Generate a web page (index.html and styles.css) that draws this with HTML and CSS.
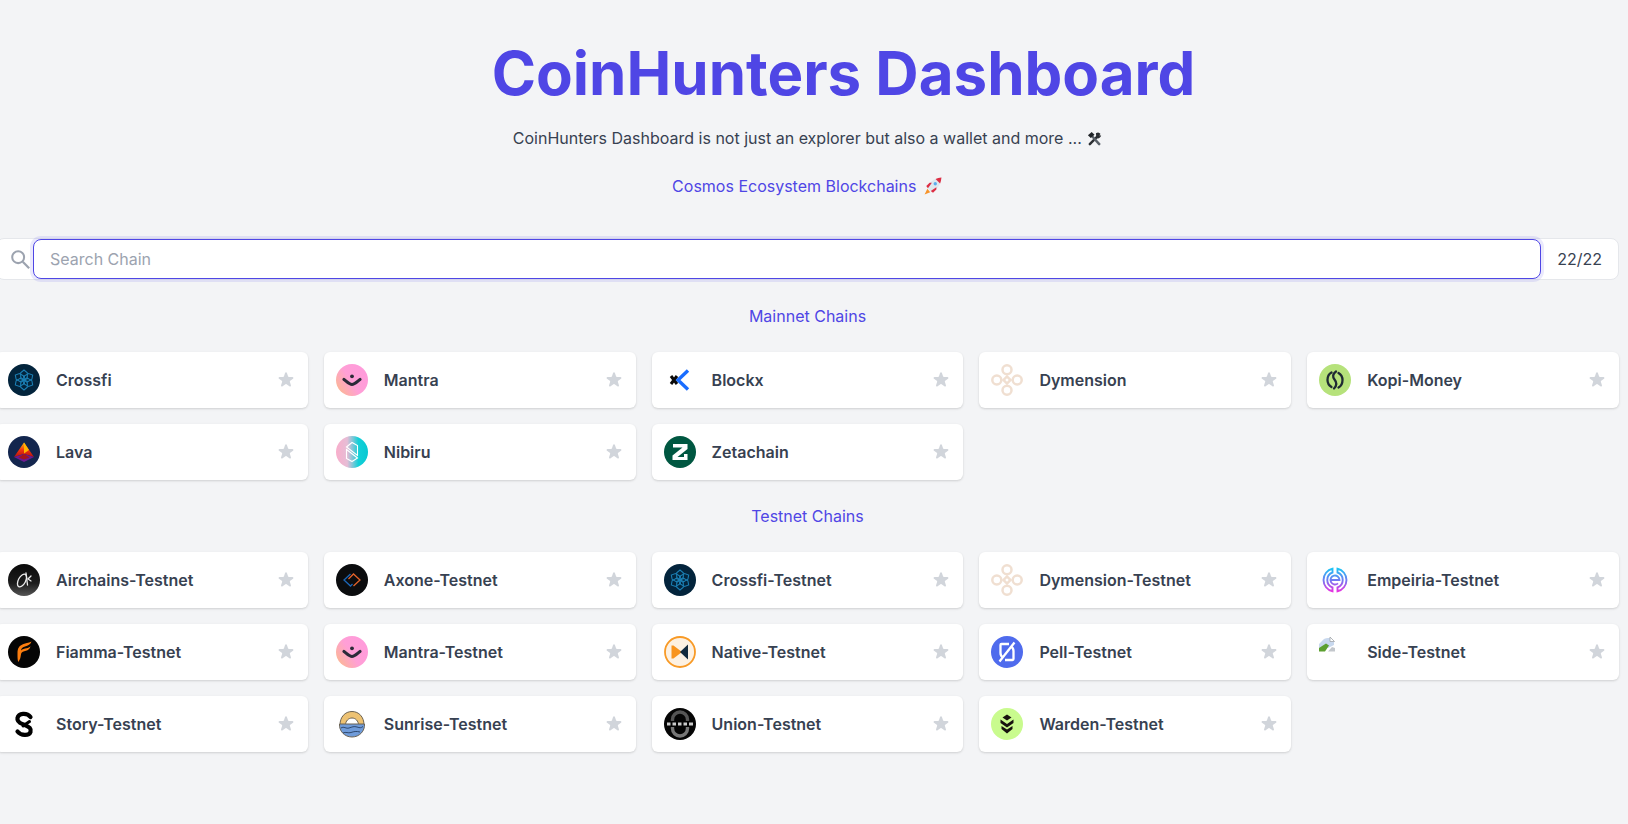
FILE: index.html
```html
<!DOCTYPE html>
<html lang="en">
<head>
    <meta charset="UTF-8">
    <meta name="viewport" content="width=device-width, initial-scale=1.0">
    <title>CoinHunters Dashboard</title>
    <link rel="stylesheet" href="styles.css">
</head>
<body>
    <svg class="icon-defs" xmlns="http://www.w3.org/2000/svg" aria-hidden="true">
        <defs>
            <linearGradient id="grad-mantra" x1="0" y1="1" x2="1" y2="0.35">
                <stop offset="0" stop-color="#fbbd83"/>
                <stop offset="0.55" stop-color="#ff9fd6"/>
                <stop offset="1" stop-color="#ff9bdb"/>
            </linearGradient>
            <linearGradient id="grad-nibiru" x1="0" y1="0" x2="1" y2="0">
                <stop offset="0" stop-color="#f9aecb"/>
                <stop offset="0.35" stop-color="#e6bdd6"/>
                <stop offset="0.7" stop-color="#12d0d8"/>
                <stop offset="1" stop-color="#08c8d2"/>
            </linearGradient>
            <linearGradient id="grad-lava" x1="0" y1="0" x2="0" y2="1">
                <stop offset="0" stop-color="#ffc20e"/>
                <stop offset="0.5" stop-color="#f2360f"/>
                <stop offset="1" stop-color="#b3140f"/>
            </linearGradient>
            <linearGradient id="grad-air" x1="0" y1="0" x2="0" y2="1">
                <stop offset="0" stop-color="#0a0a0a"/>
                <stop offset="0.6" stop-color="#1c1c1c"/>
                <stop offset="1" stop-color="#555"/>
            </linearGradient>
            <linearGradient id="grad-emp" gradientUnits="userSpaceOnUse" x1="0" y1="4" x2="0" y2="28">
                <stop offset="0" stop-color="#19c8f5"/>
                <stop offset="0.5" stop-color="#6f7cf2"/>
                <stop offset="1" stop-color="#ec2fe0"/>
            </linearGradient>

            <path id="crossfi-petal" d="M16 16l-3.300-2.500V8.800L16 6l3.300 2.800v4.700z"/>

            <symbol id="logo-crossfi" viewBox="0 0 32 32">
                <circle cx="16" cy="16" r="16" fill="#03243c"/>
                <g fill="none" stroke="#1b7fb4" stroke-width="1.100">
                    <use href="#crossfi-petal"/>
                    <use href="#crossfi-petal" transform="rotate(60 16 16)"/>
                    <use href="#crossfi-petal" transform="rotate(120 16 16)"/>
                    <use href="#crossfi-petal" transform="rotate(180 16 16)"/>
                    <use href="#crossfi-petal" transform="rotate(240 16 16)"/>
                    <use href="#crossfi-petal" transform="rotate(300 16 16)"/>
                </g>
            </symbol>

            <symbol id="logo-mantra" viewBox="0 0 32 32">
                <circle cx="16" cy="16" r="16" fill="url(#grad-mantra)"/>
                <path d="M8 15.500c2.500 1.800 5.500 5 8 5s5.500-3.200 8-5" fill="none" stroke="#2c2a38" stroke-width="3.200" stroke-linecap="round"/>
                <circle cx="16" cy="12.300" r="1.900" fill="#2c2a38"/>
            </symbol>

            <symbol id="logo-blockx" viewBox="0 0 32 32">
                <path d="M7 12l6 8M7 20l6-8" stroke="#0b0b0b" stroke-width="3" fill="none"/>
                <path d="M24 6.500L14 16l10 9.500" stroke="#1a6dff" stroke-width="3.400" fill="none"/>
            </symbol>

            <symbol id="logo-dymension" viewBox="0 0 32 32">
                <g fill="none" stroke="#f0dfd1" stroke-width="2.500">
                    <circle cx="16" cy="5.800" r="4.500"/>
                    <circle cx="16" cy="26.200" r="4.500"/>
                    <circle cx="5.800" cy="16" r="4.500"/>
                    <circle cx="26.200" cy="16" r="4.500"/>
                    <rect x="13.500" y="13.500" width="5" height="5" transform="rotate(45 16 16)"/>
                </g>
            </symbol>

            <symbol id="logo-kopi" viewBox="0 0 32 32">
                <circle cx="16" cy="16" r="16" fill="#b6e27b"/>
                <g fill="none" stroke="#1f2a33" stroke-width="2.300" stroke-linecap="round">
                    <path d="M12.500 8.500C10 9.800 8.500 12.500 8.500 16c0 3 1.500 5.500 4 7"/>
                    <path d="M19.500 23.500c2.500-1.300 4-4 4-7.500 0-3-1.500-5.500-4-7"/>
                    <path d="M17 7.500c-3.500 2.500-3.500 5.500-1.500 8 2.500 3 2.500 6-.5 9"/>
                </g>
            </symbol>

            <symbol id="logo-lava" viewBox="0 0 32 32">
                <circle cx="16" cy="16" r="16" fill="#13264e"/>
                <path d="M16 6.500l10 14.500-10-3-10 3z" fill="url(#grad-lava)"/>
                <path d="M16 6.500l5 7.500-5 3.500z" fill="#ffb400"/>
                <path d="M6 21l10-3 10 3-10 5z" fill="#6c1a8f"/>
                <path d="M10.500 21.500l5.500-3.500 5.500 3.500-5.500 2z" fill="#a5141d"/>
            </symbol>

            <symbol id="logo-nibiru" viewBox="0 0 32 32">
                <circle cx="16" cy="16" r="16" fill="url(#grad-nibiru)"/>
                <g fill="none" stroke="#fff" stroke-width="1.100">
                    <path d="M10.500 11L16 6.500l5.500 3v10z"/>
                    <path d="M10.500 13.500L21.500 22 16 25.500l-5.500-3z"/>
                </g>
            </symbol>

            <symbol id="logo-zeta" viewBox="0 0 32 32">
                <circle cx="16" cy="16" r="16" fill="#005741"/>
                <path d="M9 8h14.500v5L13.500 21H20v-3h3.500v6h-15v-4.500l10-8H9z" fill="#fff"/>
            </symbol>

            <symbol id="logo-airchains" viewBox="0 0 32 32">
                <circle cx="16" cy="16" r="16" fill="url(#grad-air)"/>
                <g fill="none" stroke="#ececec" stroke-width="1.300" stroke-linecap="round">
                    <ellipse cx="14" cy="16.500" rx="3.600" ry="7" transform="rotate(28 14 16.500)"/>
                    <path d="M18 9l1.500 12"/>
                    <path d="M23 12l-3 3 3 2"/>
                </g>
            </symbol>

            <symbol id="logo-axone" viewBox="0 0 32 32">
                <circle cx="16" cy="16" r="16" fill="#0b0c0e"/>
                <path d="M14.500 10L8 16l6.500 6 2-2" fill="none" stroke="#1c67b8" stroke-width="1.300"/>
                <path d="M17.500 22l6.500-6-6.500-6-5 5" fill="none" stroke="#e2622a" stroke-width="1.300"/>
            </symbol>

            <symbol id="logo-empeiria" viewBox="0 0 32 32">
                <g fill="none" stroke="url(#grad-emp)" stroke-width="1.900">
                    <path d="M13.500 4.700a11.600 11.600 0 0 0 0 22.600V23.500a8 8 0 0 1 0-15z"/>
                    <path d="M18.500 4.700a11.600 11.600 0 0 1 0 22.600V23.500a8 8 0 0 0 0-15z"/>
                    <path d="M11.500 16h9a4.500 4.500 0 1 0-1.500 3.400"/>
                </g>
            </symbol>

            <symbol id="logo-fiamma" viewBox="0 0 32 32">
                <circle cx="16" cy="16" r="16" fill="#050505"/>
                <path d="M23.500 5.500c-1 3-3.500 4.200-6.500 5-3 .8-4 2.300-4 4.500v-.5c1.500-1.500 3.500-1.800 5.500-2.200 1.700-.4 3-.9 4-2-.5 2.500-2.500 4-4.500 4.500-2.500.6-4.200 1-4.800 2.700-.5 1.500-.2 5.500-3 8.500-.8-3-.7-6-.7-9 0-4.500 1.500-7.500 6-9 3.500-1.100 6-1.200 8-2.500z" fill="#fb7d0f"/>
            </symbol>

            <symbol id="logo-native" viewBox="0 0 32 32">
                <circle cx="16" cy="16" r="15" fill="#fdf1e2" stroke="#f89a26" stroke-width="1.800"/>
                <path d="M7.500 9.500h2L18 16l-8.500 6.500h-2z" fill="#f8941e"/>
                <path d="M24 8.500v15L16 16z" fill="#132a3d"/>
            </symbol>

            <symbol id="logo-pell" viewBox="0 0 32 32">
                <circle cx="16" cy="16" r="16" fill="#4f6bed"/>
                <g fill="none" stroke="#fff" stroke-width="2.300" stroke-linejoin="round">
                    <path d="M18 8H10.500a1 1 0 0 0-1 1v8c0 2 .8 3.500 2.500 4.500"/>
                    <path d="M14 24h7.500a1 1 0 0 0 1-1v-8c0-2-.8-3.500-2.500-4.500"/>
                    <path d="M8.500 25.500L23.500 6.500"/>
                </g>
            </symbol>

            <symbol id="logo-story" viewBox="0 0 32 32">
                <g fill="none" stroke="#000" stroke-linecap="round">
                    <path d="M22.500 9C19 4.500 10.500 5 9.500 10 8.500 15 14 15.500 17 17c4 2 6.500 3 5.500 7-1.500 4-9.500 4-13-.5" stroke-width="4.200"/>
                    <path d="M21.500 13.500L15 18" stroke-width="3"/>
                </g>
            </symbol>

            <symbol id="logo-sunrise" viewBox="0 0 32 32">
                <path d="M4 17C4 9 9 3.500 16 3.500S28 9 28 17z" fill="#edc273" stroke="#6b6253" stroke-width="1"/>
                <path d="M9.500 17c0-4 3-7 6.500-7s6.500 3 6.500 7z" fill="#fff" stroke="#6b6253" stroke-width="1"/>
                <path d="M3.500 16h25c.5 7-5 13-12.500 13S3 23 3.500 16z" fill="#6f9bd9" stroke="#6b6253" stroke-width="1"/>
                <path d="M5 20c3-2 5 1 8 0s5-2 8-1 4 1 6-.5M7 25c3-1.500 5 .5 8-.5s5-1.500 9-.5" fill="none" stroke="#2f4a70" stroke-width="1"/>
            </symbol>

            <symbol id="logo-union" viewBox="0 0 32 32">
                <circle cx="16" cy="16" r="16" fill="#050505"/>
                <path d="M8.500 13v-1.500a7.500 7.500 0 0 1 15 0V13" fill="none" stroke="#555" stroke-width="3.400"/>
                <path d="M8.500 19v1.500a7.500 7.500 0 0 0 15 0V19" fill="none" stroke="#777" stroke-width="3.400"/>
                <path d="M3 16h3.500M8.500 16H12M14 16h3.500M19.500 16H23M25 16h4" stroke="#ccc" stroke-width="3"/>
            </symbol>

            <symbol id="logo-warden" viewBox="0 0 32 32">
                <circle cx="16" cy="16" r="16" fill="#c9fb8e"/>
                <path d="M16 6.500l4.500 3-4.500 3-4.500-3z" fill="#17120f"/>
                <path d="M9.500 11.500l6.500 4.500 6.500-4.500v3.500L16 19.500 9.500 15z" fill="#17120f"/>
                <path d="M10.500 18l5.500 3.500 5.500-3.500v3L16 25.500 10.500 21z" fill="#17120f"/>
            </symbol>

            <symbol id="icon-star" viewBox="0 0 20 20">
                <path d="M9.050 2.930c.3-.92 1.600-.92 1.900 0l1.070 3.290a1 1 0 0 0 .95.690h3.460c.97 0 1.370 1.240.59 1.810l-2.800 2.030a1 1 0 0 0-.36 1.120l1.070 3.290c.3.920-.76 1.690-1.540 1.120l-2.800-2.030a1 1 0 0 0-1.180 0l-2.800 2.030c-.78.570-1.840-.2-1.540-1.120l1.070-3.290a1 1 0 0 0-.36-1.120l-2.800-2.030c-.78-.57-.38-1.810.59-1.810h3.460a1 1 0 0 0 .95-.69z"/>
            </symbol>
        </defs>
    </svg>

    <main class="page">
        <header class="hero">
            <h1 class="hero-title">CoinHunters Dashboard</h1>
            <p class="hero-text">CoinHunters Dashboard is not just an explorer but also a wallet and more ...
                <svg class="emoji" viewBox="0 0 16 16" xmlns="http://www.w3.org/2000/svg">
                    <path d="M3 14L12.500 4.500" stroke="#2b2f33" stroke-width="2.600" stroke-linecap="round"/>
                    <path d="M9.500 2.500a3.500 3.500 0 0 1 5 .8l-1.900 1.200.6 1 1.900-1.200a3.500 3.500 0 0 1-5 3.200z" fill="#2b2f33"/>
                    <path d="M13 14L5 5" stroke="#596068" stroke-width="2.600" stroke-linecap="round"/>
                    <path d="M1 4.500L5 1l3 3-4 3.500z" fill="#1f2327"/>
                </svg>
            </p>
            <p class="hero-sub">Cosmos Ecosystem Blockchains
                <svg class="emoji emoji-rocket" viewBox="0 0 16 16" xmlns="http://www.w3.org/2000/svg">
                    <path d="M3 10.500l-2.500 5 5-2z" fill="#f79329"/>
                    <path d="M3 9.500c.5-3 3.500-7.500 12.500-9-1 9-6 12-9 12.500z" fill="#dfe8ee"/>
                    <path d="M15.500.5c-.2 2-.6 3.700-1.200 5.200L10.300 1.700C11.800 1.100 13.500.7 15.500.5z" fill="#dd2e44"/>
                    <path d="M2 8l3-3h2L3.500 10zM8 14l3-3v-2l-5 3.500z" fill="#dd2e44"/>
                    <circle cx="10" cy="6" r="1.500" fill="#5dadec"/>
                </svg>
            </p>
        </header>

        <div class="search-bar">
            <span class="search-icon">
                <svg viewBox="0 0 24 24" xmlns="http://www.w3.org/2000/svg">
                    <circle cx="10" cy="10" r="6.500" fill="none" stroke="#9ca3af" stroke-width="2.200"/>
                    <path d="M15 15l7 7" stroke="#9ca3af" stroke-width="2.400"/>
                </svg>
            </span>
            <input class="search-input" type="text" placeholder="Search Chain">
            <span class="search-count">22/22</span>
        </div>

        <h2 class="section-title">Mainnet Chains</h2>
        <div class="chain-grid">
            <a class="chain-card" href="#crossfi"><svg class="chain-logo"><use href="#logo-crossfi"/></svg><span class="chain-name">Crossfi</span><svg class="chain-star"><use href="#icon-star"/></svg></a>
            <a class="chain-card" href="#mantra"><svg class="chain-logo"><use href="#logo-mantra"/></svg><span class="chain-name">Mantra</span><svg class="chain-star"><use href="#icon-star"/></svg></a>
            <a class="chain-card" href="#blockx"><svg class="chain-logo"><use href="#logo-blockx"/></svg><span class="chain-name">Blockx</span><svg class="chain-star"><use href="#icon-star"/></svg></a>
            <a class="chain-card" href="#dymension"><svg class="chain-logo"><use href="#logo-dymension"/></svg><span class="chain-name">Dymension</span><svg class="chain-star"><use href="#icon-star"/></svg></a>
            <a class="chain-card" href="#kopi-money"><svg class="chain-logo"><use href="#logo-kopi"/></svg><span class="chain-name">Kopi-Money</span><svg class="chain-star"><use href="#icon-star"/></svg></a>
            <a class="chain-card" href="#lava"><svg class="chain-logo"><use href="#logo-lava"/></svg><span class="chain-name">Lava</span><svg class="chain-star"><use href="#icon-star"/></svg></a>
            <a class="chain-card" href="#nibiru"><svg class="chain-logo"><use href="#logo-nibiru"/></svg><span class="chain-name">Nibiru</span><svg class="chain-star"><use href="#icon-star"/></svg></a>
            <a class="chain-card" href="#zetachain"><svg class="chain-logo"><use href="#logo-zeta"/></svg><span class="chain-name">Zetachain</span><svg class="chain-star"><use href="#icon-star"/></svg></a>
        </div>

        <h2 class="section-title">Testnet Chains</h2>
        <div class="chain-grid">
            <a class="chain-card" href="#airchains"><svg class="chain-logo"><use href="#logo-airchains"/></svg><span class="chain-name">Airchains-Testnet</span><svg class="chain-star"><use href="#icon-star"/></svg></a>
            <a class="chain-card" href="#axone"><svg class="chain-logo"><use href="#logo-axone"/></svg><span class="chain-name">Axone-Testnet</span><svg class="chain-star"><use href="#icon-star"/></svg></a>
            <a class="chain-card" href="#crossfi-testnet"><svg class="chain-logo"><use href="#logo-crossfi"/></svg><span class="chain-name">Crossfi-Testnet</span><svg class="chain-star"><use href="#icon-star"/></svg></a>
            <a class="chain-card" href="#dymension-testnet"><svg class="chain-logo"><use href="#logo-dymension"/></svg><span class="chain-name">Dymension-Testnet</span><svg class="chain-star"><use href="#icon-star"/></svg></a>
            <a class="chain-card" href="#empeiria"><svg class="chain-logo"><use href="#logo-empeiria"/></svg><span class="chain-name">Empeiria-Testnet</span><svg class="chain-star"><use href="#icon-star"/></svg></a>
            <a class="chain-card" href="#fiamma"><svg class="chain-logo"><use href="#logo-fiamma"/></svg><span class="chain-name">Fiamma-Testnet</span><svg class="chain-star"><use href="#icon-star"/></svg></a>
            <a class="chain-card" href="#mantra-testnet"><svg class="chain-logo"><use href="#logo-mantra"/></svg><span class="chain-name">Mantra-Testnet</span><svg class="chain-star"><use href="#icon-star"/></svg></a>
            <a class="chain-card" href="#native"><svg class="chain-logo"><use href="#logo-native"/></svg><span class="chain-name">Native-Testnet</span><svg class="chain-star"><use href="#icon-star"/></svg></a>
            <a class="chain-card" href="#pell"><svg class="chain-logo"><use href="#logo-pell"/></svg><span class="chain-name">Pell-Testnet</span><svg class="chain-star"><use href="#icon-star"/></svg></a>
            <a class="chain-card" href="#side">
                <span class="chain-logo">
                    <svg class="broken-image" viewBox="0 0 16 16" xmlns="http://www.w3.org/2000/svg">
                        <path d="M3 5q2-3 6-3h2l4 4v3l-6 3H0V8z" fill="#c8d8ee"/>
                        <path d="M11 1v4.500h4.500z" fill="#fff" stroke="#a0a4aa" stroke-width="0.800"/>
                        <path d="M0 15.500V12l7-4.500 3 2-4 6z" fill="#5ca030"/>
                        <path d="M9 15.500l4-4.500 3 1v3.500z" fill="#c3c7cc"/>
                    </svg>
                </span>
                <span class="chain-name">Side-Testnet</span><svg class="chain-star"><use href="#icon-star"/></svg>
            </a>
            <a class="chain-card" href="#story"><svg class="chain-logo"><use href="#logo-story"/></svg><span class="chain-name">Story-Testnet</span><svg class="chain-star"><use href="#icon-star"/></svg></a>
            <a class="chain-card" href="#sunrise"><svg class="chain-logo"><use href="#logo-sunrise"/></svg><span class="chain-name">Sunrise-Testnet</span><svg class="chain-star"><use href="#icon-star"/></svg></a>
            <a class="chain-card" href="#union"><svg class="chain-logo"><use href="#logo-union"/></svg><span class="chain-name">Union-Testnet</span><svg class="chain-star"><use href="#icon-star"/></svg></a>
            <a class="chain-card" href="#warden"><svg class="chain-logo"><use href="#logo-warden"/></svg><span class="chain-name">Warden-Testnet</span><svg class="chain-star"><use href="#icon-star"/></svg></a>
        </div>
    </main>
</body>
</html>
```

FILE: styles.css
```css
:root {
    --primary-color: #4f46e5;
    --text-color: #374151;
    --border-color: #e5e7eb;
    --page-color: #f3f4f6;
}

* {
    margin: 0;
    padding: 0;
    box-sizing: border-box;
}

html, body {
    height: 100%;
    overflow: hidden;
}

body {
    font-family: Inter, 'Noto Sans', sans-serif;
    font-size: 16px;
    line-height: 24px;
    background-color: var(--page-color);
    color: var(--text-color);
}

.icon-defs {
    position: absolute;
    width: 0;
    height: 0;
}

.page {
    width: 1623px;
    margin-left: -4px;
    padding-top: 43px;
}

.hero {
    text-align: center;
}

.hero-title {
    padding-left: 72px;
    font-size: 60px;
    line-height: 60px;
    font-weight: 700;
    color: var(--primary-color);
}

.hero-text {
    margin-top: 23px;
}

.hero-sub {
    margin-top: 24px;
    color: var(--primary-color);
}

.emoji {
    width: 15px;
    height: 15px;
    margin-left: 1px;
    vertical-align: -2px;
}

.emoji-rocket {
    width: 18px;
    height: 18px;
    margin-left: 3px;
    margin-right: 1px;
    vertical-align: -3px;
}

.search-bar {
    display: flex;
    align-items: center;
    height: 42px;
    margin-top: 40px;
    background-color: #fff;
    border: 1px solid var(--border-color);
    border-radius: 8px;
}

.search-icon {
    display: flex;
    justify-content: flex-end;
    flex: 0 0 36px;
    padding-right: 2px;
}

.search-icon svg {
    width: 22px;
    height: 22px;
}

.search-input {
    flex: 1;
    height: 40px;
    padding: 0 16px;
    font: inherit;
    color: var(--text-color);
    background-color: #fff;
    border: 1px solid var(--primary-color);
    border-radius: 8px;
    outline: none;
    box-shadow: 0 0 0 3px rgba(79, 70, 229, 0.12);
}

.search-input::placeholder {
    color: #9ca3af;
}

.search-count {
    padding: 0 16px;
}

.section-title {
    margin-top: 24px;
    font-size: 16px;
    line-height: 24px;
    font-weight: 400;
    text-align: center;
    color: var(--primary-color);
}

.chain-grid {
    display: grid;
    grid-template-columns: repeat(5, 1fr);
    gap: 16px;
    margin-top: 24px;
}

.chain-card {
    display: flex;
    align-items: center;
    height: 56px;
    padding: 0 12px;
    background-color: #fff;
    border-radius: 6px;
    box-shadow: 0 1px 3px rgba(0, 0, 0, 0.1), 0 1px 2px rgba(0, 0, 0, 0.06);
    color: var(--text-color);
    text-decoration: none;
}

.chain-logo {
    display: block;
    flex: 0 0 32px;
    width: 32px;
    height: 32px;
}

.broken-image {
    display: block;
    width: 16px;
    height: 16px;
}

.chain-name {
    flex: 1;
    margin-left: 16px;
    font-weight: 600;
}

.chain-star {
    flex: 0 0 20px;
    width: 20px;
    height: 20px;
    fill: #d1d5db;
}
```
